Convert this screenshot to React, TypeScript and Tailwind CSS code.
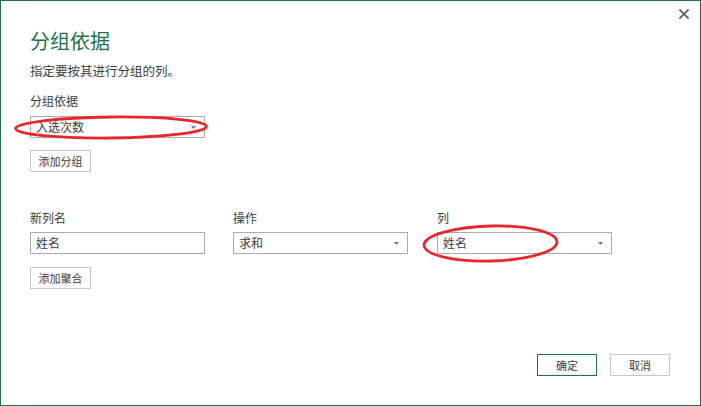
function Arrow() {
  return (
    <svg width="5" height="3" viewBox="0 0 5 3" className="shrink-0">
      <path d="M0 0 H5 L2.5 3 Z" fill="#777" />
    </svg>
  );
}

function SelectBox({ value }: { value: string }) {
  return (
    <div className="w-[175px] h-[22px] border border-[#ababab] bg-white flex items-center justify-between pl-[5px] pr-[8px] text-[12px] leading-[16px]">
      <span>{value}</span>
      <Arrow />
    </div>
  );
}

function InputBox({ value }: { value: string }) {
  return (
    <div className="w-[175px] h-[22px] border border-[#ababab] bg-white flex items-center pl-[5px] text-[12px] leading-[16px]">
      <span>{value}</span>
    </div>
  );
}

function SmallButton({ label }: { label: string }) {
  return (
    <div className="w-[61px] h-[22px] border border-[#c6c6c6] bg-white flex items-center justify-center text-[11px] leading-[14px]">
      {label}
    </div>
  );
}

export default function App() {
  return (
    <div className="relative w-[701px] h-[406px] bg-white border border-[#217346] flex flex-col text-[#3c3c3c] font-['Noto_Sans_CJK_SC','Liberation_Sans',sans-serif] overflow-hidden">
      <div className="flex justify-end pt-[8px] pr-[11px] h-[24px] shrink-0">
        <svg width="10" height="10" viewBox="0 0 10 10">
          <path d="M1 1 L9 9 M9 1 L1 9" stroke="#666" strokeWidth="1.8" strokeLinecap="square" />
        </svg>
      </div>
      <div className="pl-[29px] flex flex-col">
        <div className="mt-[6px] text-[20px] leading-[20px] text-[#217346]">分组依据</div>
        <div className="mt-[12px] text-[12.5px] leading-[16px]">指定要按其进行分组的列。</div>
        <div className="mt-[14px] text-[12px] leading-[16px]">分组依据</div>
        <div className="mt-[7px]">
          <SelectBox value="入选次数" />
        </div>
        <div className="mt-[12px]">
          <SmallButton label="添加分组" />
        </div>
        <div className="mt-[38px] flex">
          <div className="flex flex-col">
            <div className="text-[12px] leading-[16px]">新列名</div>
            <div className="mt-[6px]">
              <InputBox value="姓名" />
            </div>
          </div>
          <div className="flex flex-col ml-[28px]">
            <div className="text-[12px] leading-[16px]">操作</div>
            <div className="mt-[6px]">
              <SelectBox value="求和" />
            </div>
          </div>
          <div className="flex flex-col ml-[29px]">
            <div className="text-[12px] leading-[16px]">列</div>
            <div className="mt-[6px]">
              <SelectBox value="姓名" />
            </div>
          </div>
        </div>
        <div className="mt-[13px]">
          <SmallButton label="添加聚合" />
        </div>
      </div>
      <div className="mt-auto flex justify-end gap-[13px] pr-[30px] pb-[29px]">
        <div className="w-[60px] h-[22px] border border-[#217346] flex items-center justify-center text-[11px] leading-[14px]">
          确定
        </div>
        <div className="w-[60px] h-[22px] border border-[#c6c6c6] flex items-center justify-center text-[11px] leading-[14px]">
          取消
        </div>
      </div>
      <svg
        className="absolute left-[-1px] top-[-1px] pointer-events-none"
        width="701"
        height="406"
        viewBox="0 0 701 406"
      >
        <ellipse cx="111" cy="127.5" rx="95.5" ry="10.5" fill="none" stroke="#e8262c" strokeWidth="2.8" transform="rotate(-0.6 111 127.5)" />
        <ellipse cx="490.5" cy="243.5" rx="66.5" ry="17.5" fill="none" stroke="#e8262c" strokeWidth="2.8" transform="rotate(-1.5 490.5 243.5)" />
      </svg>
    </div>
  );
}
